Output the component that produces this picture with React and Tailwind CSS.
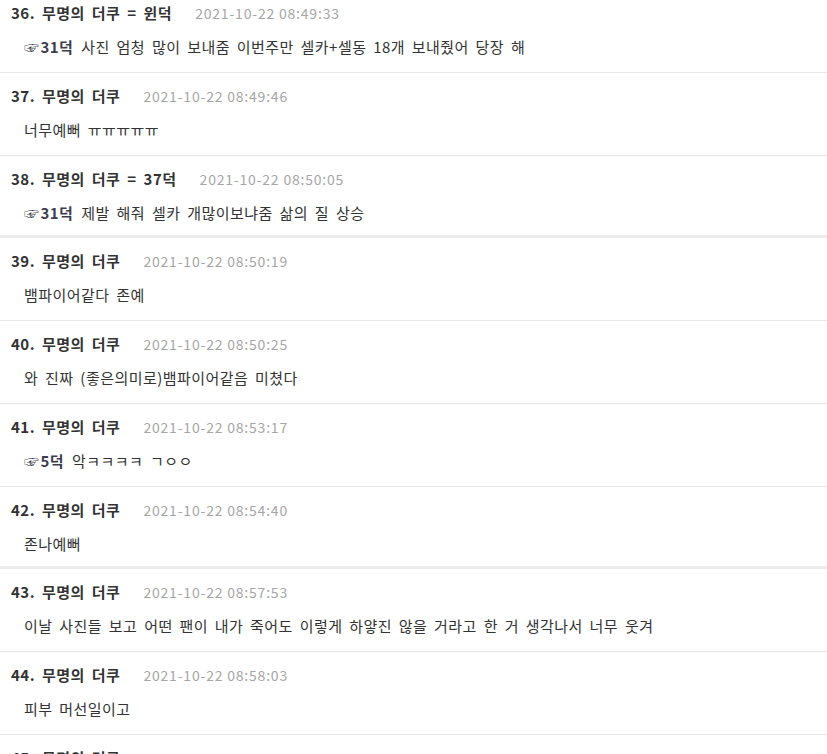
import React from "react";

const rows = [
  { n: 36, nick: "무명의 더쿠 = 윈덕", time: "08:49:33", ref: "31덕", body: "사진 엄청 많이 보내줌 이번주만 셀카+셀동 18개 보내줬어 당장 해" },
  { n: 37, nick: "무명의 더쿠", time: "08:49:46", body: "너무예뻐 ㅠㅠㅠㅠㅠ" },
  { n: 38, nick: "무명의 더쿠 = 37덕", time: "08:50:05", ref: "31덕", body: "제발 해줘 셀카 개많이보냐줌 삶의 질 상승", thick: true },
  { n: 39, nick: "무명의 더쿠", time: "08:50:19", body: "뱀파이어같다 존예" },
  { n: 40, nick: "무명의 더쿠", time: "08:50:25", body: "와 진짜 (좋은의미로)뱀파이어같음 미쳤다" },
  { n: 41, nick: "무명의 더쿠", time: "08:53:17", ref: "5덕", body: "악ㅋㅋㅋㅋ ㄱㅇㅇ" },
  { n: 42, nick: "무명의 더쿠", time: "08:54:40", body: "존나예뻐", thick: true },
  { n: 43, nick: "무명의 더쿠", time: "08:57:53", body: "이날 사진들 보고 어떤 팬이 내가 죽어도 이렇게 하얗진 않을 거라고 한 거 생각나서 너무 웃겨" },
  { n: 44, nick: "무명의 더쿠", time: "08:58:03", body: "피부 머선일이고" },
  { n: 45, nick: "무명의 더쿠", time: "08:58:39", body: "" },
];

export default function App() {
  return (
    <div
      className="w-[827px] h-[754px] overflow-hidden bg-white"
      style={{ fontFamily: '"Noto Sans CJK KR", "Noto Sans", sans-serif' }}
    >
      <div className="-mt-[10px]">
        {rows.map((r) => (
          <div
            key={r.n}
            className={
              r.thick
                ? "pt-[13px] pb-[12px] border-b-[3px] border-[#ececec]"
                : "pt-[13px] pb-[15px] border-b border-[#e6e6e6]"
            }
          >
            <div className="flex items-center h-5 pl-[11px] leading-5">
              <span className="font-bold text-[15px] text-[#333333] tracking-[0.5px] [word-spacing:3px]">
                {r.n}. {r.nick}
              </span>
              <span className="ml-[23px] text-[14px] text-[#a6a6a6] tracking-[0.8px]">
                2021-10-22 {r.time}
              </span>
            </div>
            <div className="mt-[14px] h-5 pl-[24px] text-[15px] leading-5 text-[#333333] tracking-[0.45px] [word-spacing:3px] whitespace-nowrap">
              {r.ref && (
                <span className="font-bold text-[#3d3d4d] mr-[8px]">
                  <span className="font-normal text-[15px] mr-[1px]">☞</span>
                  {r.ref}
                </span>
              )}
              {r.body}
            </div>
          </div>
        ))}
      </div>
    </div>
  );
}
